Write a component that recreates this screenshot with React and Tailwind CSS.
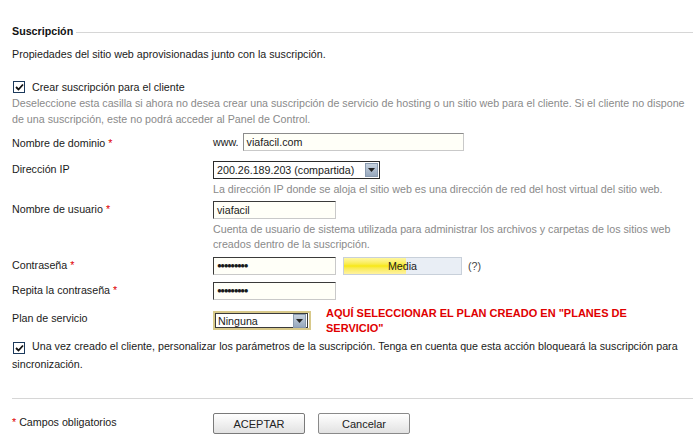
import React from "react";

const Check = () => (
  <span className="inline-flex h-[12px] w-[12px] shrink-0 items-center justify-center border border-[#1c3a5c] bg-white">
    <svg width="9" height="8" viewBox="0 0 9 8">
      <path d="M1 4 L3.5 6.5 L8 1.5" fill="none" stroke="#111" strokeWidth="1.8" />
    </svg>
  </span>
);

const Req = () => <span className="text-[#e00000]"> *</span>;

const Arrow = () => (
  <span className="flex h-[14px] w-[13px] items-center justify-center border border-[#8a9bb0] bg-gradient-to-b from-[#c6d1de] to-[#97a8bd]">
    <svg width="7" height="4" viewBox="0 0 7 4">
      <path d="M0 0 H7 L3.5 4 Z" fill="#222" />
    </svg>
  </span>
);

const Field = ({ label, required, children, className = "" }) => (
  <div className={"flex " + className}>
    <div className="w-[201px] shrink-0 pt-[1px]">
      {label}
      {required && <Req />}
    </div>
    <div className="flex-1">{children}</div>
  </div>
);

const inputCls =
  "h-[18px] border border-t-[#3a3a3a] border-l-[#3a3a3a] border-r-[#c9c9c9] border-b-[#c9c9c9] bg-[#fffff8] px-[3px] leading-[16px]";

const Dots = () => (
  <span className="tracking-[-1.5px] text-[8px] font-bold">●●●●●●●●●</span>
);

export default function App() {
  return (
    <div
      className="min-h-screen bg-white pl-[12px] pt-[24px] text-[10.7px] leading-[14px] text-[#1a1a1a]"
      style={{ fontFamily: "Tahoma, 'Liberation Sans', Arial, sans-serif" }}
    >
      <div className="flex items-center">
        <span className="font-bold text-[#111]">Suscripción</span>
        <span className="ml-[3px] mt-[2px] h-px flex-1 bg-[#d6d6d6]" />
      </div>

      <div className="mt-[9px]">Propiedades del sitio web aprovisionadas junto con la suscripción.</div>

      <div className="mt-[19px] flex items-center gap-[7px] pl-[1px]">
        <Check />
        <span>Crear suscripción para el cliente</span>
      </div>
      <div className="mt-[1px] pr-[6px] leading-[16px] text-[#8a8a8a]">
        Deseleccione esta casilla si ahora no desea crear una suscripción de servicio de hosting o un sitio web para el cliente. Si el cliente no dispone de una suscripción, este no podrá acceder al Panel de Control.
      </div>

      <Field label="Nombre de dominio" required className="mt-[6px] items-center">
        <div className="flex items-center gap-[4px]">
          <span>www.</span>
          <div className={inputCls + " w-[221px] border-t-[#8c8c8c] border-l-[#8c8c8c]"}>viafacil.com</div>
        </div>
      </Field>

      <Field label="Dirección IP" className="mt-[10px]">
        <div className="flex h-[18px] w-[167px] items-center justify-between border border-[#2b2b2b] bg-white pl-[3px] pr-[1px]">
          <span>200.26.189.203 (compartida)</span>
          <Arrow />
        </div>
        <div className="mt-[3px] text-[#8a8a8a]">La dirección IP donde se aloja el sitio web es una dirección de red del host virtual del sitio web.</div>
      </Field>

      <Field label="Nombre de usuario" required className="mt-[5px]">
        <div className={inputCls + " w-[123px]"}>viafacil</div>
        <div className="mt-[3px] pr-[10px] leading-[15px] text-[#8a8a8a]">
          Cuenta de usuario de sistema utilizada para administrar los archivos y carpetas de los sitios web creados dentro de la suscripción.
        </div>
      </Field>

      <Field label="Contraseña" required className="mt-[5px] items-start">
        <div className="flex items-center">
          <div className={inputCls + " w-[123px] flex items-center"}><Dots /></div>
          <div className="relative ml-[7px] flex h-[18px] w-[119px] items-center justify-center border border-[#c8d0da] bg-[#e9eef5]">
            <div className="absolute inset-y-0 left-0 w-[62px] bg-gradient-to-b from-[#fff7a0] via-[#f7e800] to-[#fff2a0]" />
            <span className="relative text-[#222]">Media</span>
          </div>
          <span className="ml-[6px] text-[#444]">(?)</span>
        </div>
      </Field>

      <Field label="Repita la contraseña" required className="mt-[7px]">
        <div className={inputCls + " w-[123px] flex items-center"}><Dots /></div>
      </Field>

      <Field label="Plan de servicio" className="mt-[10px] items-start">
        <div className="flex items-start">
          <div className="mt-[1px] flex h-[19px] w-[98px] items-center justify-between border-2 border-[#d8c98a] bg-white pr-[1px]">
            <div className="flex h-full flex-1 items-center justify-between border border-[#3a3a3a] pl-[2px] pr-[1px]">
              <span>Ninguna</span>
              <Arrow />
            </div>
          </div>
          <div className="ml-[15px] -mt-[4px] text-[11px] font-bold leading-[15px] text-[#e00000]" style={{ fontFamily: "'Liberation Sans', Arial, sans-serif" }}>
            AQUÍ SELECCIONAR EL PLAN CREADO EN "PLANES DE<br />SERVICIO"
          </div>
        </div>
      </Field>

      <div className="mt-[1px] pr-[8px] leading-[18px]">
        <span className="mr-[7px] inline-flex translate-y-[2px] pl-[1px] align-baseline">
          <Check />
        </span>
        Una vez creado el cliente, personalizar los parámetros de la suscripción. Tenga en cuenta que esta acción bloqueará la suscripción para sincronización.
      </div>

      <div className="mt-[25px] h-px bg-[#d6d6d6]" />

      <div className="mt-[14px] flex items-start">
        <div className="w-[201px] shrink-0 pt-[2px]">
          <span className="text-[#e00000]">*</span> Campos obligatorios
        </div>
        <button className="h-[21px] w-[92px] rounded-[2px] border border-[#7a7a7a] bg-gradient-to-b from-white to-[#e2e2e2] text-[11px] text-[#222]">
          ACEPTAR
        </button>
        <button className="ml-[13px] h-[21px] w-[92px] rounded-[2px] border border-[#8a8a8a] bg-gradient-to-b from-white to-[#e2e2e2] text-[11px] text-[#222]">
          Cancelar
        </button>
      </div>
    </div>
  );
}
